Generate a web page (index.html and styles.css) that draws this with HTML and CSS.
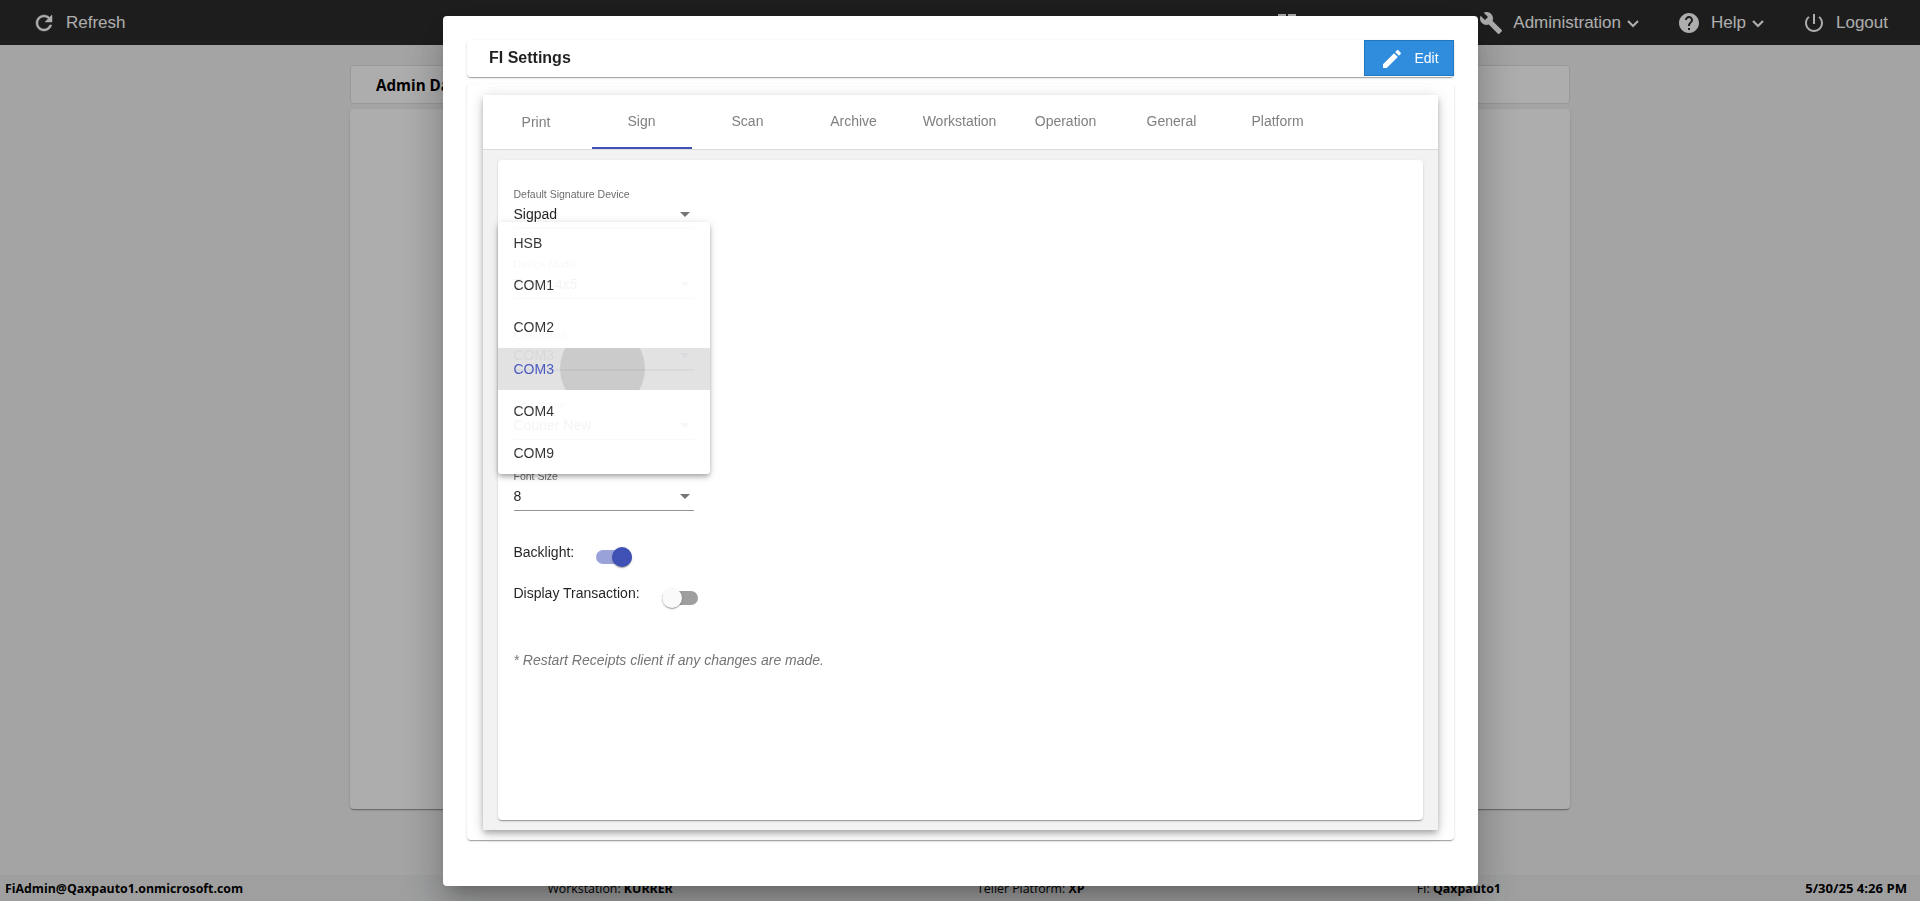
FILE: index.html
```
<!DOCTYPE html>
<html lang="en">
<head>
  <meta charset="utf-8">
  <title>FI Settings</title>
  <link rel="stylesheet" href="styles.css">
</head>
<body>
  <div class="page">
    <header class="topbar">
      <a class="nav-item refresh">
        <svg class="icon" viewBox="0 0 24 24"><path d="M17.65 6.35C16.2 4.9 14.21 4 12 4c-4.42 0-7.99 3.58-7.99 8s3.57 8 7.99 8c3.73 0 6.84-2.55 7.73-6h-2.08c-.82 2.33-3.04 4-5.65 4-3.31 0-6-2.69-6-6s2.69-6 6-6c1.66 0 3.14.69 4.22 1.78L13 11h7V4l-2.35 2.35z"/></svg>
        <span>Refresh</span>
      </a>
      <nav class="nav">
        <a class="nav-item dashboard">
          <svg class="icon" viewBox="0 0 24 24"><path d="M3 13h8V3H3v10zm0 8h8v-6H3v6zm10 0h8V11h-8v10zm0-18v6h8V3h-8z"/></svg>
        </a>
        <a class="nav-item admin">
          <svg class="icon" viewBox="0 0 24 24"><path d="M22.7 19l-9.1-9.1c.9-2.3.4-5-1.5-6.9-2-2-5-2.4-7.4-1.3L9 6 6 9 1.6 4.7C.4 7.1.9 10.1 2.9 12.1c1.9 1.9 4.6 2.4 6.9 1.5l9.1 9.1c.4.4 1 .4 1.4 0l2.3-2.3c.5-.4.5-1.1.1-1.4z"/></svg>
          <span>Administration</span>
          <svg class="chevron" viewBox="0 0 12 8"><path d="M1 1l5 5 5-5"/></svg>
        </a>
        <a class="nav-item help">
          <svg class="icon" viewBox="0 0 24 24"><path d="M12 2C6.48 2 2 6.48 2 12s4.48 10 10 10 10-4.48 10-10S17.52 2 12 2zm1 17h-2v-2h2v2zm2.07-7.75l-.9.92C13.45 12.9 13 13.5 13 15h-2v-.5c0-1.1.45-2.1 1.17-2.83l1.24-1.26c.37-.36.59-.86.59-1.41 0-1.1-.9-2-2-2s-2 .9-2 2H8c0-2.21 1.79-4 4-4s4 1.79 4 4c0 .88-.36 1.68-.93 2.25z"/></svg>
          <span>Help</span>
          <svg class="chevron" viewBox="0 0 12 8"><path d="M1 1l5 5 5-5"/></svg>
        </a>
        <a class="nav-item logout">
          <svg class="icon" viewBox="0 0 24 24"><path d="M13 3h-2v10h2V3zm4.83 2.17l-1.42 1.42C17.99 7.86 19 9.81 19 12c0 3.87-3.13 7-7 7s-7-3.13-7-7c0-2.19 1.01-4.14 2.58-5.42L6.17 5.17C4.23 6.82 3 9.26 3 12c0 4.97 4.03 9 9 9s9-4.03 9-9c0-2.74-1.23-5.18-3.17-6.83z"/></svg>
          <span>Logout</span>
        </a>
      </nav>
    </header>

    <main class="content">
      <div class="title-card">Admin Dashboard</div>
      <div class="body-card"></div>
    </main>

    <footer class="footer">
      <b>FiAdmin@Qaxpauto1.onmicrosoft.com</b>
      <span>Workstation: <b>KURRER</b></span>
      <span class="teller">Teller Platform: <b>XP</b></span>
      <span>FI: <b>Qaxpauto1</b></span>
      <b>5/30/25 4:26 PM</b>
    </footer>
  </div>

  <div class="backdrop">
    <div class="dialog">
      <div class="dialog-header">
        <h3>FI Settings</h3>
        <button class="edit-btn">
          <svg class="pencil" viewBox="0 0 24 24"><path d="M3 17.25V21h3.75L17.81 9.94l-3.75-3.75L3 17.25zM20.71 7.04c.39-.39.39-1.02 0-1.41l-2.34-2.34c-.39-.39-1.02-.39-1.41 0l-1.83 1.83 3.75 3.75 1.83-1.83z"/></svg>
          Edit
        </button>
      </div>

      <div class="settings-card">
        <div class="tabs">
          <div class="tab-header">
            <div class="tab first">Print</div>
            <div class="tab active">Sign</div>
            <div class="tab">Scan</div>
            <div class="tab">Archive</div>
            <div class="tab">Workstation</div>
            <div class="tab">Operation</div>
            <div class="tab">General</div>
            <div class="tab">Platform</div>
          </div>
          <div class="tab-body">
            <div class="form-card">
              <div class="field">
                <label>Default Signature Device</label>
                <div class="select">Sigpad<i class="arrow"></i></div>
              </div>
              <div class="field">
                <label>Device Model</label>
                <div class="select">Topaz 4x5<i class="arrow"></i></div>
              </div>
              <div class="field focused">
                <label>Connection</label>
                <div class="select">COM3<i class="arrow"></i></div>
              </div>
              <div class="field">
                <label>Font Name</label>
                <div class="select">Courier New<i class="arrow"></i></div>
              </div>
              <div class="field">
                <label>Font Size</label>
                <div class="select">8<i class="arrow"></i></div>
              </div>

              <div class="toggle-row backlight">
                <span>Backlight:</span>
                <div class="toggle on"><div class="thumb"></div></div>
              </div>
              <div class="toggle-row">
                <span>Display Transaction:</span>
                <div class="toggle"><div class="thumb"></div></div>
              </div>

              <p class="note">* Restart Receipts client if any changes are made.</p>

              <div class="options">
                <div class="option">HSB</div>
                <div class="option">COM1</div>
                <div class="option">COM2</div>
                <div class="option selected"><div class="ripple"></div>COM3</div>
                <div class="option">COM4</div>
                <div class="option">COM9</div>
              </div>
            </div>
          </div>
        </div>
      </div>
    </div>
  </div>
</body>
</html>
```
FILE: styles.css
```
* {
  box-sizing: border-box;
}
body {
  margin: 0;
  height: 901px;
  overflow: hidden;
  background: #f2f2f2;
  font-family: "Liberation Sans", Arial, sans-serif;
  font-size: 14px;
  color: rgba(0, 0, 0, 0.87);
}
.page {
  display: flex;
  flex-direction: column;
  height: 901px;
}

/* top bar */
.topbar {
  display: flex;
  justify-content: space-between;
  height: 45px;
  padding: 0 32px;
  background: #2c2c2c;
  color: #fff;
  font-size: 17px;
}
.nav {
  display: flex;
}
.nav-item {
  display: flex;
  align-items: center;
}
.icon {
  width: 24px;
  height: 24px;
  margin-right: 10px;
  fill: #fff;
}
.refresh .icon {
  stroke: #fff;
  stroke-width: 0.5;
}
.dashboard {
  margin-right: 170px;
}
.help {
  margin-left: 38px;
}
.logout {
  margin-left: 38px;
}
.chevron {
  width: 12px;
  height: 8px;
  margin-left: 6px;
  margin-top: 2px;
  fill: none;
  stroke: #fff;
  stroke-width: 2.2;
}

/* page behind the dialog */
.content {
  width: 1220px;
  margin: 20px auto 0;
  flex: 1;
}
.title-card {
  height: 39px;
  padding-left: 25px;
  border: 1px solid #e0e0e0;
  border-radius: 4px;
  background: #fff;
  color: #000;
  font: bold 15.2px/39px "Open Sans", sans-serif;
}
.body-card {
  height: 700px;
  margin-top: 5px;
  border-radius: 4px;
  background: #fff;
  box-shadow: 0 2px 1px -1px rgba(0, 0, 0, .2), 0 1px 1px 0 rgba(0, 0, 0, .14), 0 1px 3px 0 rgba(0, 0, 0, .12);
}
.footer {
  display: flex;
  justify-content: space-between;
  height: 26px;
  padding: 0 13px 0 5px;
  background: #eaebec;
  color: #000;
  font: 12.35px/28px "Open Sans", sans-serif;
}
.footer > b:last-child {
  font-size: 13.1px;
  line-height: 27px;
}
.teller {
  margin-right: 28px;
}

/* dialog */
.backdrop {
  position: fixed;
  top: 0;
  left: 0;
  width: 100%;
  height: 100%;
  display: flex;
  justify-content: center;
  padding-top: 16px;
  background: rgba(0, 0, 0, 0.32);
}
.dialog {
  width: 1035px;
  height: 870px;
  padding: 24px;
  border-radius: 4px;
  background: #fff;
  box-shadow: 0 11px 15px -7px rgba(0, 0, 0, .2), 0 24px 38px 3px rgba(0, 0, 0, .14), 0 9px 46px 8px rgba(0, 0, 0, .12);
}
.dialog-header,
.settings-card,
.form-card {
  border-radius: 4px;
  background: #fff;
  box-shadow: 0 2px 1px -1px rgba(0, 0, 0, .2), 0 1px 1px 0 rgba(0, 0, 0, .14), 0 1px 3px 0 rgba(0, 0, 0, .12);
}
.dialog-header {
  display: flex;
  justify-content: space-between;
  height: 37px;
}
.dialog-header h3 {
  margin: 0 0 0 22.5px;
  font-size: 16px;
  line-height: 35px;
}
.edit-btn {
  display: flex;
  align-items: center;
  width: 90px;
  height: 36px;
  padding: 0 0 0 15px;
  border: 1px solid #2377bf;
  background: #308cdc;
  color: #fff;
  font-family: inherit;
  font-size: 14px;
}
.pencil {
  width: 24px;
  height: 24px;
  margin-top: 2px;
  margin-right: 11px;
  fill: #fff;
}
.settings-card {
  height: 756px;
  margin-top: 7px;
  padding: 11px 16px;
}
.tabs {
  height: 735px;
  background: #f2f2f2;
  box-shadow: 0 3px 5px -1px rgba(0, 0, 0, .2), 0 5px 8px 0 rgba(0, 0, 0, .14), 0 1px 14px 0 rgba(0, 0, 0, .12);
}
.tab-header {
  display: flex;
  gap: 6px;
  height: 55px;
  padding-left: 3px;
  border-bottom: 1px solid #dcdcdc;
  background: #fff;
}
.tab {
  width: 100px;
  height: 54px;
  line-height: 53px;
  text-align: center;
  color: #808080;
}
.tab.first {
  padding: 1px 0 0 1px;
}
.tab.active {
  border-bottom: 2px solid #3f51b5;
}
.tab-body {
  padding: 10px 15px;
}
.form-card {
  position: relative;
  height: 660px;
  padding: 27px 16px 0;
}

/* select fields */
.field {
  width: 180px;
  height: 70.4px;
}
.field label {
  display: block;
  font-size: 10.5px;
  line-height: 15px;
  color: rgba(0, 0, 0, 0.6);
}
.select {
  display: flex;
  justify-content: space-between;
  align-items: center;
  height: 27px;
  padding: 0 4px 2px 0;
  border-bottom: 1px solid rgba(0, 0, 0, 0.42);
}
.arrow {
  margin-top: 1px;
  border: 5px solid transparent;
  border-top-color: rgba(0, 0, 0, 0.54);
  border-bottom: 0;
}
.focused label {
  color: #3f51b5;
}
.focused .select {
  height: 28px;
  border-bottom: 2px solid #3f51b5;
}
.focused .arrow {
  border-top-color: #3f51b5;
}

/* toggles */
.toggle-row {
  display: flex;
  height: 41px;
  line-height: 16px;
}
.toggle-row.backlight {
  margin-top: 5px;
}
.toggle {
  width: 36px;
  height: 14px;
  margin: 6px 0 0 22px;
  border-radius: 8px;
  background: #9e9e9e;
}
.thumb {
  width: 20px;
  height: 20px;
  margin-top: -3px;
  border-radius: 50%;
  background: #fafafa;
  box-shadow: 0 2px 1px -1px rgba(0, 0, 0, .2), 0 1px 1px 0 rgba(0, 0, 0, .14), 0 1px 3px 0 rgba(0, 0, 0, .12);
}
.toggle.on {
  background: #9aa3d9;
}
.on .thumb {
  margin-left: 16px;
  background: #3f51b5;
}
.note {
  margin: 26px 0 0;
  line-height: 16px;
  font-style: italic;
  color: #757575;
}

/* open option list over the fields */
.options {
  position: absolute;
  top: 62px;
  left: 0;
  width: 212px;
  border-radius: 4px;
  background: rgba(255, 255, 255, 0.95);
  box-shadow: 0 2px 4px -1px rgba(0, 0, 0, .2), 0 4px 5px 0 rgba(0, 0, 0, .14), 0 1px 10px 0 rgba(0, 0, 0, .12);
}
.option {
  height: 42px;
  padding-left: 16px;
  line-height: 42px;
  color: rgba(0, 0, 0, 0.8);
}
.option.selected {
  position: relative;
  overflow: hidden;
  background: rgba(0, 0, 0, 0.115);
  color: #4a5bc0;
}
.ripple {
  position: absolute;
  top: -22px;
  left: 62px;
  width: 85px;
  height: 85px;
  border-radius: 50%;
  background: rgba(0, 0, 0, 0.1);
}
```
